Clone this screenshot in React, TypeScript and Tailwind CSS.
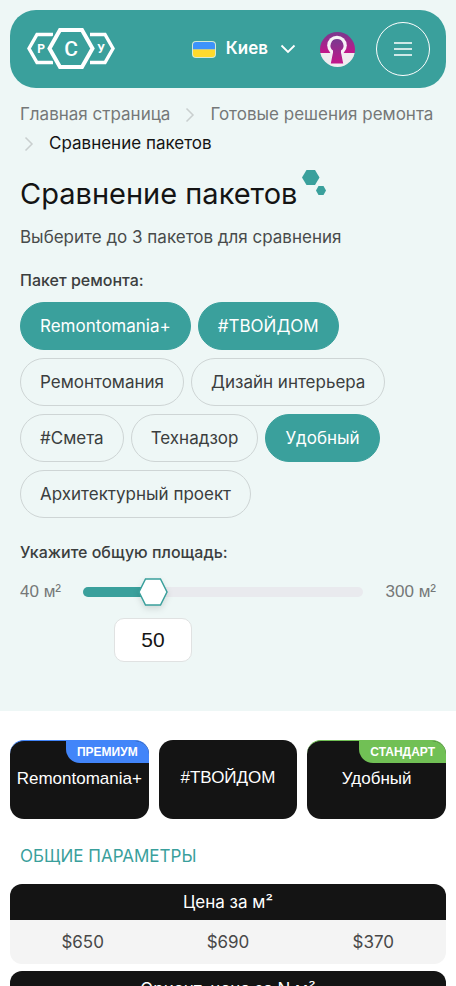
import React, { useState } from "react";

interface Package {
  id: string;
  name: string;
  price: string;
  badge?: { label: string; tone: "premium" | "standard" };
}

const PACKAGES: Package[] = [
  { id: "remontomania-plus", name: "Remontomania+", price: "$650", badge: { label: "ПРЕМИУМ", tone: "premium" } },
  { id: "tvoydom", name: "#ТВОЙДОМ", price: "$690" },
  { id: "remontomania", name: "Ремонтомания", price: "$420" },
  { id: "design", name: "Дизайн интерьера", price: "$30" },
  { id: "smeta", name: "#Смета", price: "$5" },
  { id: "supervision", name: "Технадзор", price: "$15" },
  { id: "comfort", name: "Удобный", price: "$370", badge: { label: "СТАНДАРТ", tone: "standard" } },
  { id: "architecture", name: "Архитектурный проект", price: "$25" },
];

const MAX_SELECTED = 3;

const Logo = () => (
  <svg width="90" height="44" viewBox="0 0 90 44" fill="none" aria-hidden="true">
    <g stroke="#fff" strokeWidth="3.4">
      <path d="M27 7.500H11L3 21.500L11 35.500H27" />
      <path d="M64 7.500H79L87 21.500L79 35.500H64" />
    </g>
    <path
      d="M34 3H56L66.500 21.500L56 40H34L23.500 21.500Z"
      fill="#3aa09c"
      stroke="#3aa09c"
      strokeWidth="7"
    />
    <path d="M34 3H56L66.500 21.500L56 40H34L23.500 21.500Z" stroke="#fff" strokeWidth="4" />
    <g fill="#fff" fontFamily="Roboto, sans-serif" fontWeight="700" textAnchor="middle">
      <text x="15" y="26" fontSize="12">Р</text>
      <text x="75" y="26" fontSize="12">У</text>
      <text x="45" y="29" fontSize="21" fontWeight="500">С</text>
    </g>
  </svg>
);

const Flag = () => (
  <svg width="24" height="17" viewBox="0 0 24 17" aria-hidden="true">
    <rect width="24" height="17" rx="4" fill="#d5ebd5" />
    <path d="M1 8.500V4a3 3 0 0 1 3-3h16a3 3 0 0 1 3 3v4.500Z" fill="#3d93fb" />
    <path d="M1 8.500V13a3 3 0 0 0 3 3h16a3 3 0 0 0 3-3V8.500Z" fill="#ffda2c" />
  </svg>
);

const KeyholeIcon = () => (
  <svg width="35" height="35" viewBox="0 0 35 35" aria-hidden="true">
    <defs>
      <clipPath id="keyhole-disc">
        <circle cx="17.500" cy="17.500" r="17.500" />
      </clipPath>
      <linearGradient id="keyhole-fill" x1="0" y1="0" x2="0" y2="1">
        <stop offset="0" stopColor="#79398f" />
        <stop offset="1" stopColor="#c3168a" />
      </linearGradient>
    </defs>
    <g clipPath="url(#keyhole-disc)">
      <rect width="35" height="21" fill="url(#keyhole-fill)" />
      <rect y="21" width="35" height="14" fill="#f0ecf0" />
      <circle cx="17" cy="13.500" r="9.800" fill="#f7f2f7" />
      <path d="M17 7a6.500 6.500 0 0 0-4 11.600V20.500L10.800 31.500H23.200L21 20.500V18.600A6.500 6.500 0 0 0 17 7Z" fill="url(#keyhole-fill)" />
    </g>
  </svg>
);

const Chevron = ({ className }: { className: string }) => (
  <svg width="16" height="16" viewBox="0 0 16 16" fill="none" stroke="currentColor" className={className} aria-hidden="true">
    <path d="M4.500 1.500L11 8L4.500 14.500" strokeWidth="1.500" />
  </svg>
);

const Header = () => (
  <header className="flex h-[78px] items-center rounded-[26px] bg-[#3aa09c] px-4 text-white">
    <a href="#home" aria-label="РСУ" className="mr-auto">
      <Logo />
    </a>
    <button type="button" className="flex cursor-pointer items-center text-[17px] font-semibold">
      <Flag />
      <span className="ml-2.5">Киев</span>
      <svg width="16" height="10" viewBox="0 0 16 10" fill="none" stroke="currentColor" strokeWidth="1.800" className="ml-3" aria-hidden="true">
        <path d="M1.500 1.500L8 8L14.500 1.500" />
      </svg>
    </button>
    <a href="#account" aria-label="Личный кабинет" className="ml-6">
      <KeyholeIcon />
    </a>
    <button
      type="button"
      aria-label="Меню"
      className="ml-[21px] flex size-[54px] cursor-pointer items-center justify-center rounded-full border border-white"
    >
      <svg width="20" height="16" viewBox="0 0 20 16" stroke="currentColor" strokeWidth="1.400" aria-hidden="true">
        <path d="M1 2H19M1 8H19M1 14H19" />
      </svg>
    </button>
  </header>
);

const Breadcrumbs = () => (
  <nav aria-label="Навигация" className="text-[17px] leading-[29px] text-[#757878]">
    <ol className="flex flex-wrap items-center">
      <li>
        <a href="#home">Главная страница</a>
      </li>
      <li className="flex items-center">
        <Chevron className="mx-3 text-[#c9cfcf]" />
        <a href="#solutions">Готовые решения ремонта</a>
      </li>
      <li className="flex items-center">
        <Chevron className="mr-3 ml-px text-[#c9cfcf]" />
        <span aria-current="page" className="text-[#141414]">Сравнение пакетов</span>
      </li>
    </ol>
  </nav>
);

interface AreaSliderProps {
  value: number;
  onChange: (val: number) => void;
}

const AreaSlider: React.FC<AreaSliderProps> = ({ value, onChange }) => {
  // thumb starts a quarter of the way in and moves over the rest of the track
  const percent = 25 + ((value - 50) / 250) * 75;

  return (
    <div className="mt-3.5 flex items-start font-['Liberation_Sans',Arial,sans-serif] text-[17px]">
      <span className="w-[63px] leading-[27px] text-[#757878]">40 м²</span>
      <div className="relative flex-1">
        <div className="flex h-7 items-center">
          <div className="h-2.5 w-full overflow-hidden rounded-full bg-[#e9eaee]">
            <div className="h-full bg-[#3aa09c]" style={{ width: `${percent}%` }} />
          </div>
        </div>
        <svg
          width="30"
          height="28"
          viewBox="0 0 30 28"
          className="absolute top-0 -translate-x-1/2 drop-shadow-md"
          style={{ left: `${percent}%` }}
          aria-hidden="true"
        >
          <path d="M7.500 1H22.500L29 14L22.500 27H7.500L1 14Z" fill="#fff" stroke="#3aa09c" strokeWidth="1.500" />
        </svg>
        <input
          type="range"
          aria-label="Общая площадь"
          min={40}
          max={300}
          value={value}
          onChange={(e) => onChange(Number(e.target.value))}
          className="absolute inset-x-0 top-0 h-7 cursor-pointer opacity-0"
        />
        <input
          type="text"
          id="area"
          value={value}
          onChange={(e) => onChange(Number(e.target.value.replace(/\D/g, "")))}
          className="mt-3 block h-11 w-[78px] rounded-[10px] border border-[#e0e2e2] bg-white text-center text-[21px] text-[#141414] outline-none"
          style={{ marginLeft: `calc(${percent}% - 39px)` }}
        />
      </div>
      <span className="w-[73px] text-right leading-[27px] text-[#757878]">300 м²</span>
    </div>
  );
};

const BADGE_STYLES = {
  premium: "bg-[#4285f9]",
  standard: "bg-[#71c055]",
};

const EDGE_STYLES = {
  premium: "border-t border-[#4285f9]",
  standard: "border-t border-[#71c055]",
};

const PackageCard = ({ pack }: { pack: Package }) => (
  <div
    className={`relative flex h-[79px] items-center justify-center overflow-hidden rounded-[14px] bg-[#141414] pb-[3px] text-[17px] text-white ${
      pack.badge ? EDGE_STYLES[pack.badge.tone] : ""
    }`}
  >
    {pack.badge && (
      <span
        className={`absolute top-0 right-0 rounded-bl-[14px] px-[11px] text-xs leading-[22px] font-bold ${BADGE_STYLES[pack.badge.tone]}`}
      >
        {pack.badge.label}
      </span>
    )}
    <span>{pack.name}</span>
  </div>
);

interface PriceTableProps {
  title: string;
  values: string[];
}

const PriceTable: React.FC<PriceTableProps> = ({ title, values }) => (
  <table className="mb-[7px] w-full table-fixed border-separate border-spacing-0 overflow-hidden rounded-xl bg-[#f4f4f4] text-center text-[17px]">
    <thead>
      <tr>
        <th colSpan={values.length} className="h-9 bg-[#141414] pt-0.5 font-normal text-white">
          {title}
        </th>
      </tr>
    </thead>
    <tbody>
      <tr className="text-[#484848]">
        {values.map((val, i) => (
          <td key={i} className="h-11 pt-0.5">
            {val}
          </td>
        ))}
      </tr>
    </tbody>
  </table>
);

export default function App() {
  const [selected, setSelected] = useState(["remontomania-plus", "tvoydom", "comfort"]);
  const [area, setArea] = useState(50);

  const toggle = (id: string) => {
    if (selected.includes(id)) {
      setSelected(selected.filter((s) => s !== id));
    } else if (selected.length < MAX_SELECTED) {
      setSelected([...selected, id]);
    }
  };

  const compared = PACKAGES.filter((p) => selected.includes(p.id));

  return (
    <div className="bg-white font-['Inter','Liberation_Sans',sans-serif]">
      <div className="bg-[#eef7f6] px-2.5 pt-2.5 pb-[49px]">
        <Header />
        <main className="px-2.5 pt-3">
          <Breadcrumbs />
          <div className="mt-2.5 flex items-start">
            <h1 className="mt-1.5 text-[29px] leading-10 text-[#141414]">Сравнение пакетов</h1>
            <svg width="26" height="28" viewBox="0 0 26 28" fill="#3aa09c" className="ml-[5px]" aria-hidden="true">
              <path d="M4.500 2H13L17.500 9.500L13 17H4.500L0 9.500Z" />
              <path d="M16.500 18H21.500L24 22.500L21.500 27H16.500L14 22.500Z" />
            </svg>
          </div>
          <p className="mt-[11px] text-[17px] leading-6 text-[#484b4b]">Выберите до 3 пакетов для сравнения</p>
          <p className="mt-[19px] text-base leading-6 font-medium text-[#3b3e3e]">Пакет ремонта:</p>
          <div className="mt-2.5 flex flex-wrap gap-x-[7px] gap-y-2">
            {PACKAGES.map((pack) => (
              <button
                key={pack.id}
                type="button"
                aria-pressed={selected.includes(pack.id)}
                onClick={() => toggle(pack.id)}
                className={`h-12 cursor-pointer rounded-full border px-[19px] pt-0.5 text-[17px] ${
                  selected.includes(pack.id)
                    ? "border-[#3aa09c] bg-[#3aa09c] text-white"
                    : "border-[#ced5d5] text-[#3b3e3e]"
                }`}
              >
                {pack.name}
              </button>
            ))}
          </div>
          <label htmlFor="area" className="mt-[22px] block text-base leading-6 font-medium text-[#3b3e3e]">
            Укажите общую площадь:
          </label>
          <AreaSlider value={area} onChange={setArea} />
        </main>
      </div>

      <section className="px-2.5 pt-[29px]">
        <div className="grid grid-cols-3 gap-2.5 font-['Liberation_Sans',Arial,sans-serif]">
          {compared.map((pack) => (
            <PackageCard key={pack.id} pack={pack} />
          ))}
        </div>
        <h2 className="mt-[25px] mb-4 pl-2.5 text-[17px] leading-6 text-[#3aa09c]">ОБЩИЕ ПАРАМЕТРЫ</h2>
        <PriceTable title="Цена за м²" values={compared.map((p) => p.price)} />
        <PriceTable title="Ориент. цена за N м²" values={compared.map((p) => p.price)} />
      </section>
    </div>
  );
}
